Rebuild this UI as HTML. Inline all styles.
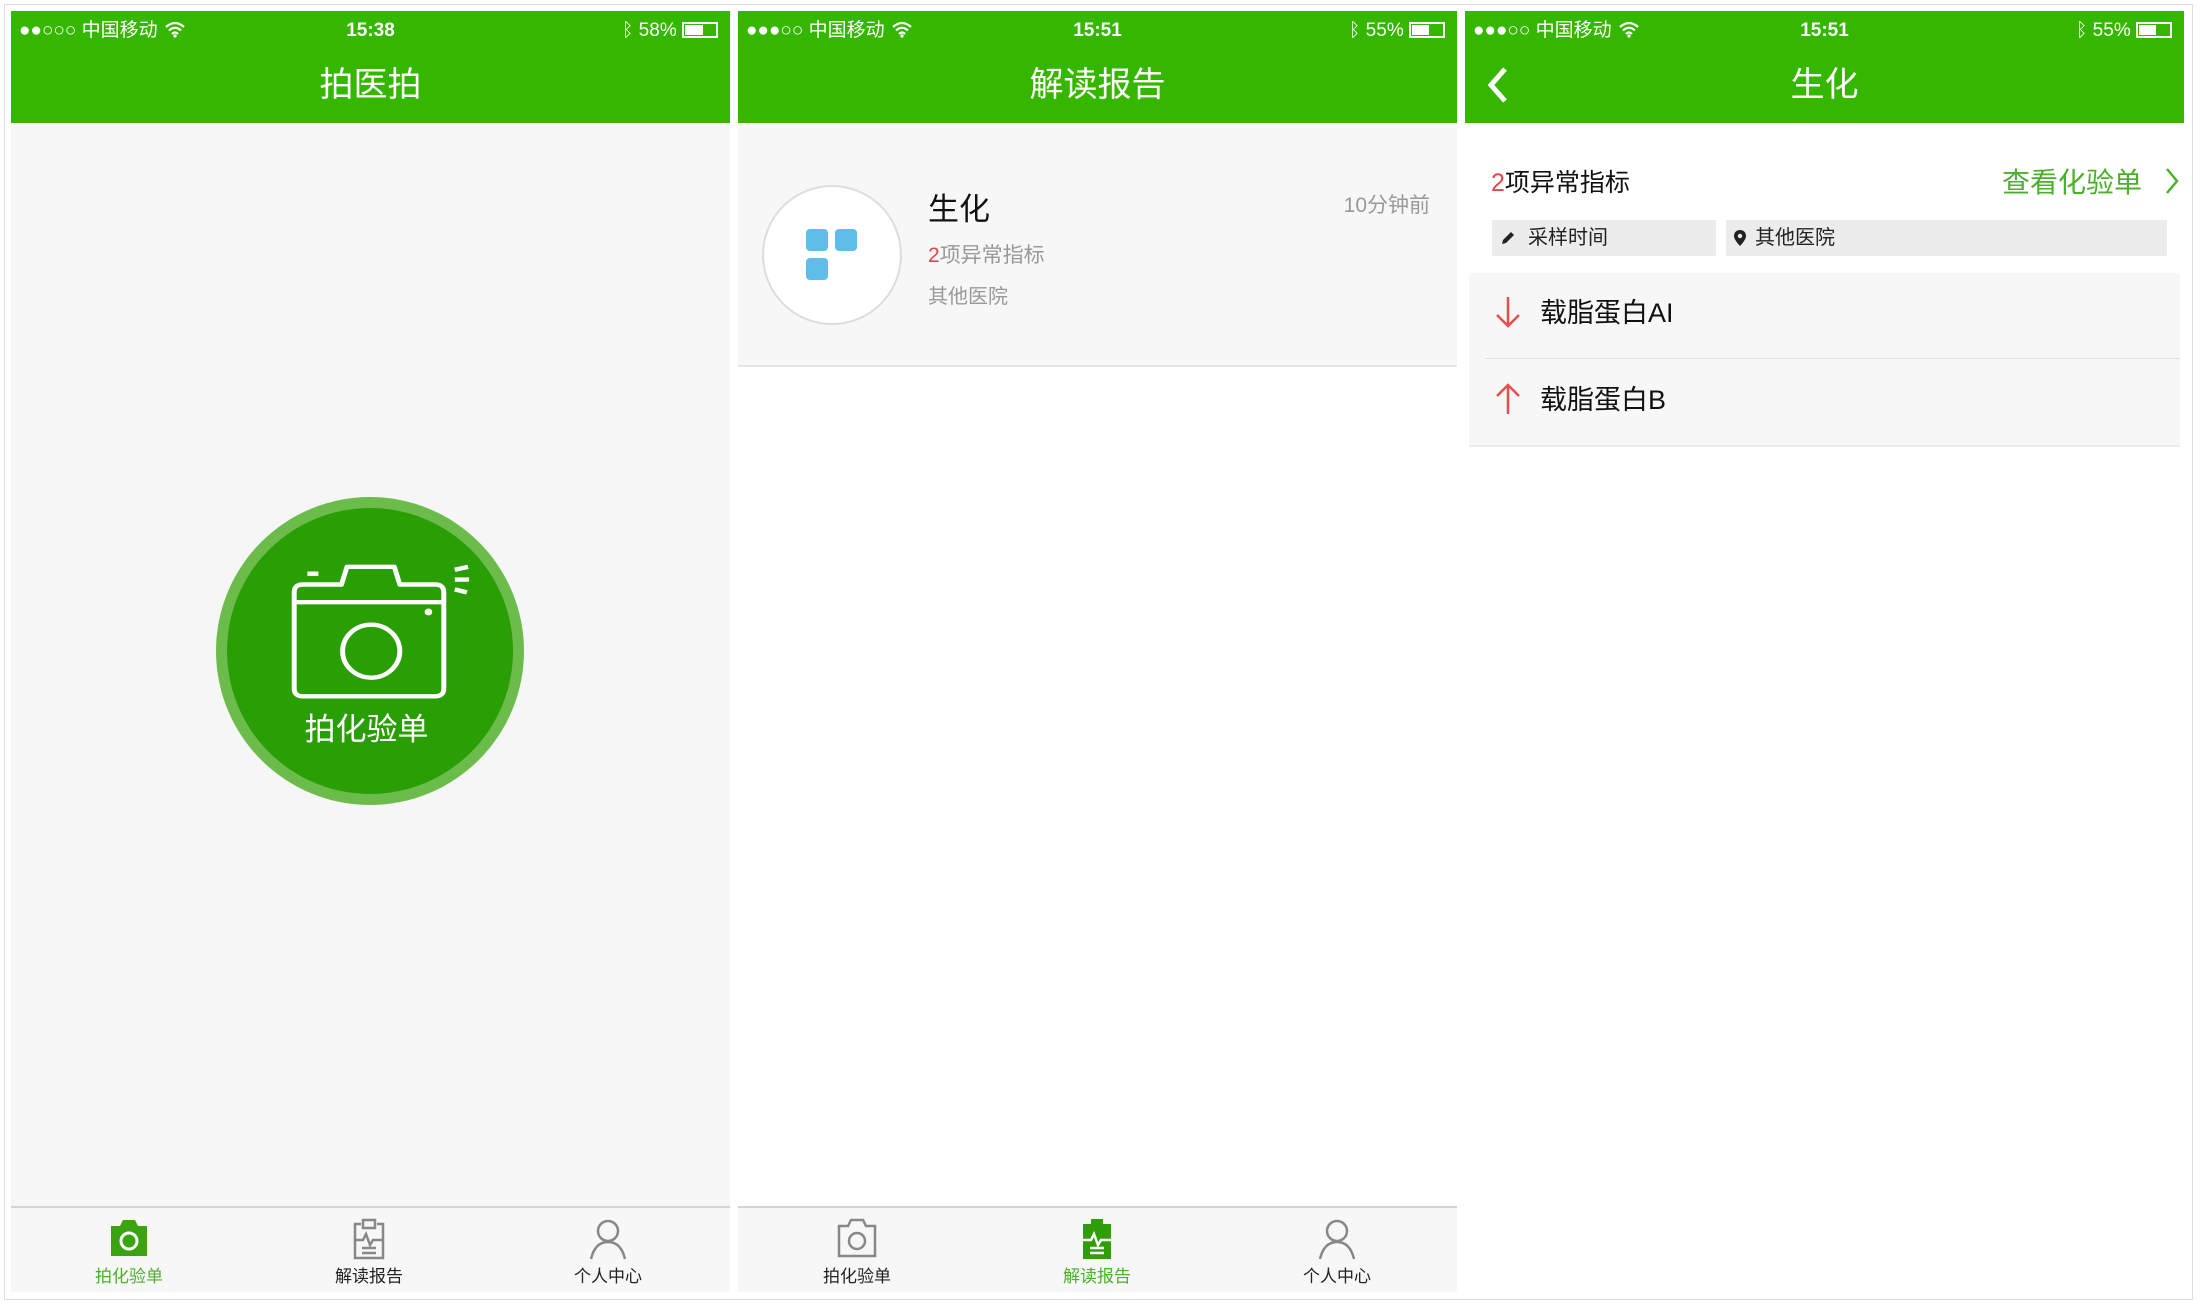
<!DOCTYPE html>
<html><head><meta charset="utf-8"><style>
*{margin:0;padding:0;box-sizing:border-box}
body{width:2197px;height:1304px;background:#fff;position:relative;overflow:hidden;font-family:"Liberation Sans","Noto Sans CJK SC",sans-serif}
.a{position:absolute}
.frame{position:absolute;left:4px;top:4px;width:2189px;height:1296px;border:1px solid #ddd}
.panel{position:absolute;top:11px;width:719px;height:1281px;overflow:hidden}
.hdr{position:absolute;left:0;top:0;width:100%;height:112px;background:#35b700;color:#fff}
.sb{position:absolute;top:8px;font-size:19px;color:#fff;line-height:24px;white-space:nowrap}
.title{position:absolute;left:0;width:100%;top:54px;text-align:center;font-size:34px;line-height:40px}
.tab{position:absolute;left:0;top:1195px;width:100%;height:86px;background:#f7f7f7;border-top:2px solid #d4d4d4}
.ti{position:absolute;width:160px;margin-left:-80px;text-align:center;font-size:17px;top:54px;color:#222}
.ti svg{position:absolute;left:58px;top:-44px}
.wf{display:inline-block;vertical-align:-2px;margin-left:6px}
</style></head><body>
<div class="frame"></div>

<!-- Panel 1 -->
<div class="panel" style="left:11px;background:#f6f6f6">
 <div class="hdr">
  <div class="sb" style="left:8px">●●○○○ 中国移动<svg class="wf" width="22" height="17" viewBox="0 0 22 17"><path d="M2 6 Q11 -2 20 6 M5 9.5 Q11 4 17 9.5 M8 13 Q11 10 14 13" fill="none" stroke="#fff" stroke-width="2.2"/><circle cx="11" cy="15" r="1.6" fill="#fff"/></svg></div>
  <div class="sb" style="left:0;width:100%;text-align:center;font-weight:bold">15:38</div>
  <div class="sb" style="right:12px">ᛒ 58% <span style="display:inline-block;width:36px;height:16px;border:2px solid #fff;vertical-align:-2px;position:relative"><span style="position:absolute;left:1px;top:1px;width:18px;height:10px;background:#fff"></span></span></div>
  <div class="title">拍医拍</div>
 </div>
 <div class="a" style="left:205px;top:486px;width:308px;height:308px;border-radius:50%;background:#6cbc4c"></div>
 <div class="a" style="left:216px;top:497px;width:286px;height:286px;border-radius:50%;background:#2a9e05"></div>
 <svg class="a" style="left:270px;top:548px" width="231" height="152" viewBox="0 0 210 155" preserveAspectRatio="none">
  <g fill="none" stroke="#fff" stroke-width="4.5" stroke-linejoin="round">
   <path d="M20 26 H55 L60 8 H103 L108 26 H140 Q148 26 148 34 V132 Q148 140 140 140 H20 Q12 140 12 132 V34 Q12 26 20 26 Z"/>
   <path d="M12 44 H148"/>
   <ellipse cx="82" cy="94" rx="26" ry="27"/>
   <path d="M24 15 H34 M158 11 L170 8 M158 21 L171 21 M158 31 L169 34"/>
  </g>
  <circle cx="134" cy="54" r="3.5" fill="#fff"/>
 </svg>
 <div class="a" style="left:0;width:100%;text-align:center;top:693px;padding-right:8px;font-size:31px;color:#fff">拍化验单</div>
 <div class="tab">
  <div class="ti" style="left:118px;color:#4bb02a"><svg width="44" height="40" viewBox="0 0 44 40"><path d="M4 8 H13 L16 2 H28 L31 8 H40 V38 H4 Z" fill="#3aa310"/><circle cx="22" cy="23" r="8" fill="none" stroke="#fff" stroke-width="3"/></svg>拍化验单</div>
  <div class="ti" style="left:358px"><svg width="44" height="42" viewBox="0 0 44 42"><g fill="none" stroke="#888" stroke-width="2.5"><path d="M14 6 H8 V40 H36 V6 H30"/><path d="M16 2 H28 V10 H16 Z"/><path d="M8 22 H16 L19 16 L23 27 L26 22 H36 M15 30 H29 M15 35 H29"/></g></svg>解读报告</div>
  <div class="ti" style="left:597px"><svg width="44" height="42" viewBox="0 0 44 42"><g fill="none" stroke="#888" stroke-width="2.5"><circle cx="22" cy="13" r="10"/><path d="M5 41 Q9 24 22 24 Q35 24 39 41"/></g></svg>个人中心</div>
 </div>
</div>

<!-- Panel 2 -->
<div class="panel" style="left:738px;background:#fff">
 <div class="hdr">
  <div class="sb" style="left:8px">●●●○○ 中国移动<svg class="wf" width="22" height="17" viewBox="0 0 22 17"><path d="M2 6 Q11 -2 20 6 M5 9.5 Q11 4 17 9.5 M8 13 Q11 10 14 13" fill="none" stroke="#fff" stroke-width="2.2"/><circle cx="11" cy="15" r="1.6" fill="#fff"/></svg></div>
  <div class="sb" style="left:0;width:100%;text-align:center;font-weight:bold">15:51</div>
  <div class="sb" style="right:12px">ᛒ 55% <span style="display:inline-block;width:36px;height:16px;border:2px solid #fff;vertical-align:-2px;position:relative"><span style="position:absolute;left:1px;top:1px;width:17px;height:10px;background:#fff"></span></span></div>
  <div class="title">解读报告</div>
 </div>
 <div class="a" style="left:0;top:112px;width:100%;height:244px;background:#f7f7f7;border-bottom:2px solid #e6e6e6"></div>
 <div class="a" style="left:24px;top:174px;width:140px;height:140px;border-radius:50%;background:#fff;border:2px solid #ddd"></div>
 <div class="a" style="left:68px;top:218px;width:22px;height:22px;border-radius:4px;background:#5ebde9"></div>
 <div class="a" style="left:97px;top:218px;width:22px;height:22px;border-radius:4px;background:#5ebde9"></div>
 <div class="a" style="left:68px;top:247px;width:22px;height:22px;border-radius:4px;background:#5ebde9"></div>
 <div class="a" style="left:190px;top:173px;font-size:31px;color:#111">生化</div>
 <div class="a" style="left:190px;top:228px;font-size:21px;color:#999"><span style="color:#e0474c">2</span>项异常指标</div>
 <div class="a" style="left:190px;top:269px;font-size:20px;color:#999">其他医院</div>
 <div class="a" style="right:27px;top:178px;font-size:21px;color:#999">10分钟前</div>
 <div class="tab">
  <div class="ti" style="left:119px"><svg width="44" height="40" viewBox="0 0 44 40"><g fill="none" stroke="#888" stroke-width="2.5"><path d="M4 8 H13 L16 2 H28 L31 8 H40 V38 H4 Z"/><circle cx="22" cy="23" r="8"/></g></svg>拍化验单</div>
  <div class="ti" style="left:359px;color:#4bb02a"><svg width="44" height="42" viewBox="0 0 44 42"><path d="M16 1 H28 V6 H36 V41 H8 V6 H16 Z" fill="#2f9e08"/><g fill="none" stroke="#fff" stroke-width="2.5"><path d="M8 22 H16 L19 16 L23 27 L26 22 H36 M15 30 H29 M15 35 H29"/></g></svg>解读报告</div>
  <div class="ti" style="left:599px"><svg width="44" height="42" viewBox="0 0 44 42"><g fill="none" stroke="#888" stroke-width="2.5"><circle cx="22" cy="13" r="10"/><path d="M5 41 Q9 24 22 24 Q35 24 39 41"/></g></svg>个人中心</div>
 </div>
</div>

<!-- Panel 3 -->
<div class="panel" style="left:1465px;background:#fff;height:1286px">
 <div class="hdr">
  <div class="sb" style="left:8px">●●●○○ 中国移动<svg class="wf" width="22" height="17" viewBox="0 0 22 17"><path d="M2 6 Q11 -2 20 6 M5 9.5 Q11 4 17 9.5 M8 13 Q11 10 14 13" fill="none" stroke="#fff" stroke-width="2.2"/><circle cx="11" cy="15" r="1.6" fill="#fff"/></svg></div>
  <div class="sb" style="left:0;width:100%;text-align:center;font-weight:bold">15:51</div>
  <div class="sb" style="right:12px">ᛒ 55% <span style="display:inline-block;width:36px;height:16px;border:2px solid #fff;vertical-align:-2px;position:relative"><span style="position:absolute;left:1px;top:1px;width:17px;height:10px;background:#fff"></span></span></div>
  <svg class="a" style="left:20px;top:54px" width="24" height="40" viewBox="0 0 24 40"><path d="M20 4 L6 20 L20 36" fill="none" stroke="#fff" stroke-width="5"/></svg>
  <div class="title">生化</div>
 </div>
 <div class="a" style="left:26px;top:152px;font-size:25px;color:#111"><span style="color:#e0474c">2</span>项异常指标</div>
 <div class="a" style="right:42px;top:150px;font-size:28px;color:#4bb02a">查看化验单</div>
 <svg class="a" style="left:699px;top:155px" width="16" height="30" viewBox="0 0 16 30"><path d="M3 3 L13 15 L3 27" fill="none" stroke="#4bb02a" stroke-width="2.5"/></svg>
 <div class="a" style="left:27px;top:209px;width:224px;height:36px;background:#ececec;font-size:20px;line-height:36px;padding-left:36px;color:#222">采样时间</div>
 <svg class="a" style="left:35px;top:219px" width="16" height="16" viewBox="0 0 16 16"><path d="M2 14 L3 10 L11 2 L14 5 L6 13 Z" fill="#222"/></svg>
 <div class="a" style="left:261px;top:209px;width:441px;height:36px;background:#ececec;font-size:20px;line-height:36px;padding-left:29px;color:#222">其他医院</div>
 <svg class="a" style="left:268px;top:218px" width="14" height="18" viewBox="0 0 14 18"><path d="M7 1 C3 1 1 4 1 7 C1 11 7 17 7 17 C7 17 13 11 13 7 C13 4 11 1 7 1 Z" fill="#222"/><circle cx="7" cy="7" r="2.2" fill="#ececec"/></svg>
 <div class="a" style="left:4px;top:262px;width:711px;height:173px;background:#f7f7f7"></div>
 <div class="a" style="left:20px;top:347px;width:695px;height:1px;background:#e0e0e0"></div>
 <div class="a" style="left:4px;top:434px;width:711px;height:2px;background:#ececec"></div>
 <svg class="a" style="left:28px;top:284px" width="30" height="34" viewBox="0 0 30 34"><path d="M15 2 V31 M4 20 L15 31 L26 20" fill="none" stroke="#e84e4e" stroke-width="2.5"/></svg>
 <svg class="a" style="left:28px;top:371px" width="30" height="34" viewBox="0 0 30 34"><path d="M15 32 V3 M4 14 L15 3 L26 14" fill="none" stroke="#e84e4e" stroke-width="2.5"/></svg>
 <div class="a" style="left:75px;top:280px;font-size:27px;color:#111">载脂蛋白AI</div>
 <div class="a" style="left:75px;top:367px;font-size:27px;color:#111">载脂蛋白B</div>
</div>
</body></html>
